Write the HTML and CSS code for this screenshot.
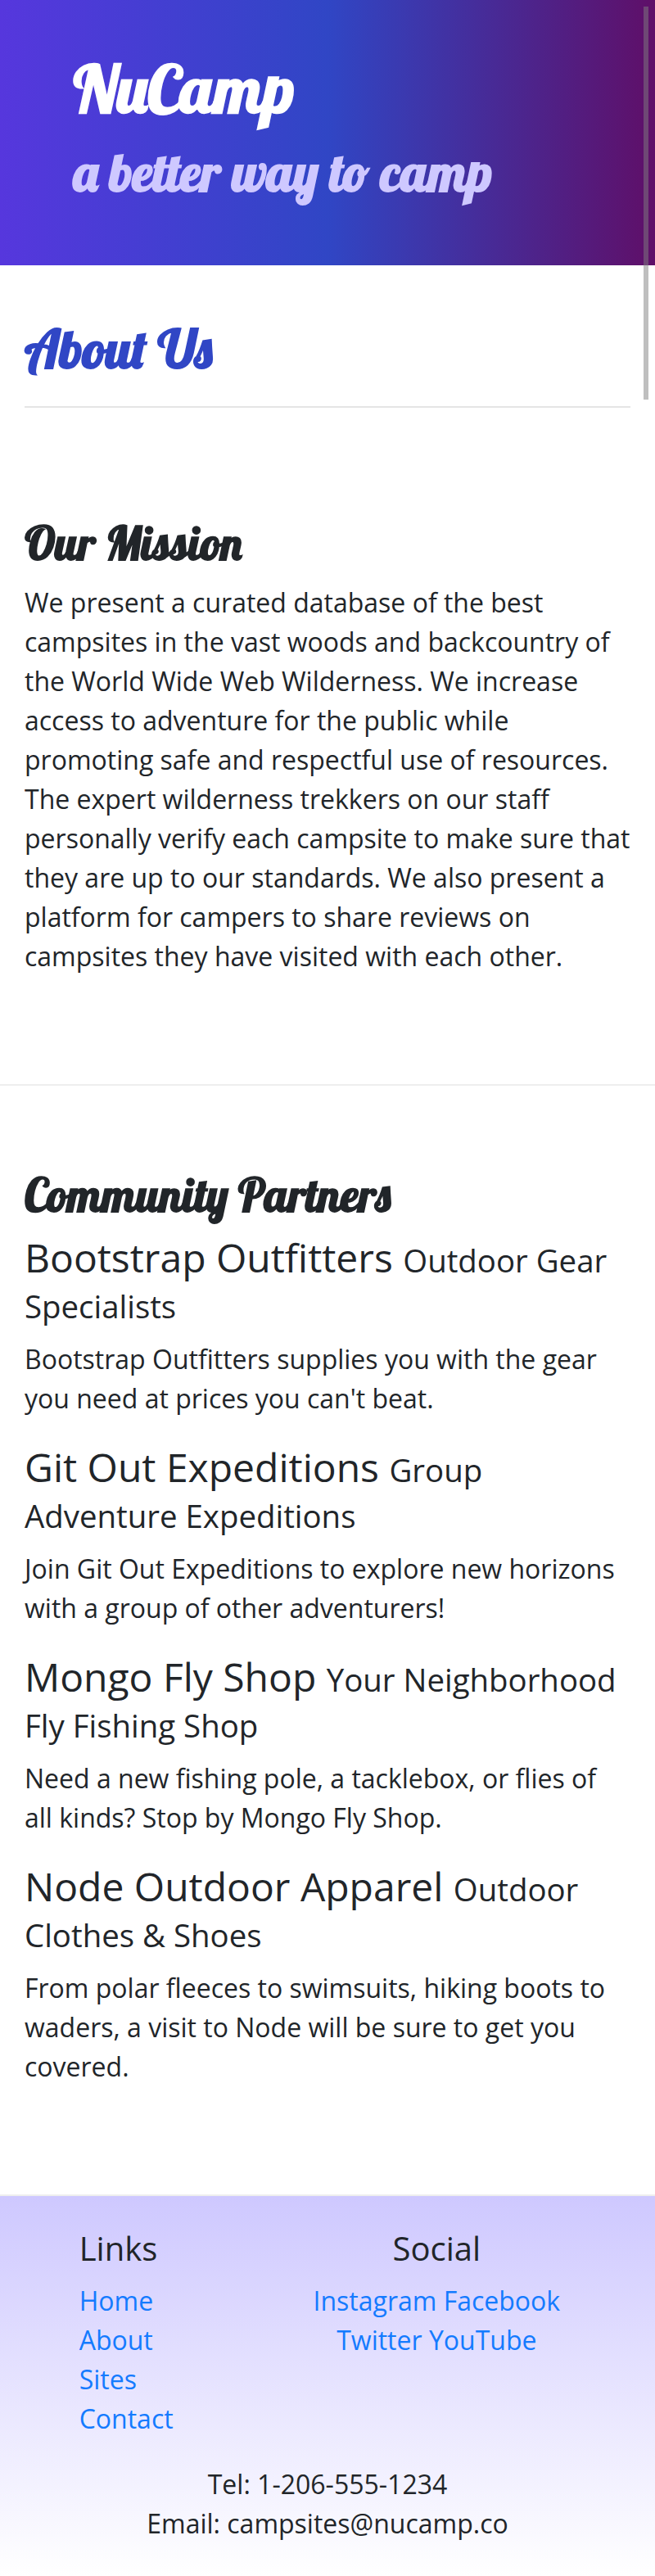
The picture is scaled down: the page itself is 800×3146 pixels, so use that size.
FILE: index.html
```html
<!DOCTYPE html>
<html lang="en">
<head>
<meta charset="utf-8">
<meta name="viewport" content="width=device-width, initial-scale=1">
<title>NuCamp: About Us</title>
<link rel="stylesheet" href="styles.css">
</head>
<body>
<div class="scroll-thumb" aria-hidden="true"></div>
<header class="jumbotron">
  <h1 class="brand">NuCamp</h1>
  <h2 class="tagline">a better way to camp</h2>
</header>
<main>
  <div class="page-title">
    <h2 class="title">About Us</h2>
    <hr class="rule">
  </div>
  <section class="row-content">
    <h3 class="section-title">Our Mission</h3>
    <p class="text">We present a curated database of the best campsites in the vast woods and backcountry of the World Wide Web Wilderness. We increase access to adventure for the public while promoting safe and respectful use of resources. The expert wilderness trekkers on our staff personally verify each campsite to make sure that they are up to our standards. We also present a platform for campers to share reviews on campsites they have visited with each other.</p>
  </section>
  <section class="row-content">
    <h3 class="section-title">Community Partners</h3>
    <h4 class="partner">Bootstrap Outfitters <small class="partner-kind">Outdoor Gear Specialists</small></h4>
    <p class="text">Bootstrap Outfitters supplies you with the gear you need at prices you can't beat.</p>
    <h4 class="partner">Git Out Expeditions <small class="partner-kind">Group Adventure Expeditions</small></h4>
    <p class="text">Join Git Out Expeditions to explore new horizons with a group of other adventurers!</p>
    <h4 class="partner">Mongo Fly Shop <small class="partner-kind">Your Neighborhood Fly Fishing Shop</small></h4>
    <p class="text">Need a new fishing pole, a tacklebox, or flies of all kinds? Stop by Mongo Fly Shop.</p>
    <h4 class="partner">Node Outdoor Apparel <small class="partner-kind">Outdoor Clothes &amp; Shoes</small></h4>
    <p class="text">From polar fleeces to swimsuits, hiking boots to waders, a visit to Node will be sure to get you covered.</p>
  </section>
</main>
<footer class="site-footer">
  <div class="footer-columns">
    <nav class="footer-links" aria-labelledby="links-title">
      <h5 class="footer-title" id="links-title">Links</h5>
      <ul class="link-list">
        <li><a class="link" href="#home">Home</a></li>
        <li><a class="link" href="#about">About</a></li>
        <li><a class="link" href="#sites">Sites</a></li>
        <li><a class="link" href="#contact">Contact</a></li>
      </ul>
    </nav>
    <div class="footer-social">
      <h5 class="footer-title">Social</h5>
      <a class="link" href="#instagram">Instagram</a>
      <a class="link" href="#facebook">Facebook</a>
      <a class="link" href="#twitter">Twitter</a>
      <a class="link" href="#youtube">YouTube</a>
    </div>
  </div>
  <address class="contact">Tel: 1-206-555-1234<br>Email: campsites@nucamp.co</address>
</footer>
</body>
</html>
```
FILE: styles.css
```css
* {
  box-sizing: border-box;
}

body {
  margin: 0;
  position: relative;
  background: #fff;
  color: #212529;
  font-family: "Open Sans", "Noto Sans", sans-serif;
  font-size: 32px;
  line-height: 48px;
}

h1, h2, h3, h4, h5, p, ul {
  margin: 0;
}

.scroll-thumb {
  position: absolute;
  top: 8px;
  right: 8px;
  width: 6px;
  height: 480px;
  background: rgba(128, 128, 128, 0.5);
}

.brand, .tagline, .title, .section-title {
  font-family: Lobster, "Liberation Serif", cursive;
  font-weight: 700;
}

.jumbotron {
  padding: 60px 90px 76px;
  background: linear-gradient(to right, #5637dd, #3046c5 50%, #5f0f68);
}

.brand {
  margin-bottom: 16px;
  color: #fff;
  font-size: 80px;
  line-height: 96px;
}

.tagline {
  color: #cec8ff;
  font-size: 64px;
  line-height: 76px;
}

.page-title {
  padding: 64px 30px 32px;
}

.title {
  color: #3046c5;
  font-size: 64px;
  line-height: 76px;
}

.rule {
  margin: 32px 0 0;
  border: 0;
  border-top: 2px solid rgba(0, 0, 0, 0.1);
}

.row-content {
  padding: 100px 30px;
  border-bottom: 2px solid #eee;
}

.section-title {
  margin-bottom: 15px;
  font-size: 56px;
  line-height: 67px;
}

.text {
  margin-bottom: 32px;
}

.partner {
  margin-bottom: 16px;
  font-size: 48px;
  font-weight: 400;
  line-height: 56px;
}

.partner-kind {
  font-size: 80%;
  line-height: 44px;
}

.site-footer {
  padding: 40px 0;
  background: linear-gradient(to bottom, #cec8ff, #fff);
}

.footer-columns {
  display: grid;
  grid-template-columns: repeat(12, 1fr);
}

.footer-links {
  grid-column: 2 / span 4;
  padding: 0 30px;
}

.footer-social {
  grid-column: 6 / span 6;
  padding: 0 30px;
  text-align: center;
}

.footer-title {
  margin-bottom: 16px;
  font-size: 40px;
  font-weight: 400;
  line-height: 48px;
}

.link-list {
  padding: 0;
  margin-bottom: 32px;
  list-style: none;
}

.link {
  color: #147bff;
  text-decoration: none;
}

.contact {
  padding: 0 30px;
  font-style: normal;
  text-align: center;
}
```
